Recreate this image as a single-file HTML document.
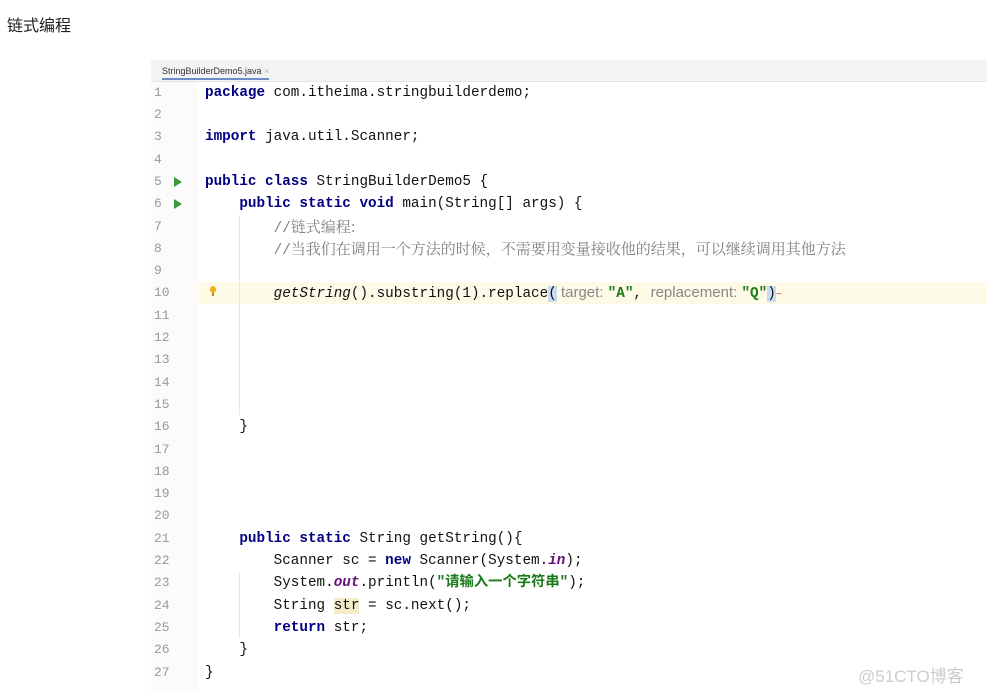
<!DOCTYPE html>
<html><head><meta charset="utf-8"><style>
body{margin:0;width:987px;height:692px;background:#fff;position:relative;overflow:hidden;font-family:"Liberation Sans","Noto Sans CJK SC",sans-serif}
.t{position:absolute;left:7px;top:12px;font-size:16px;color:#222}
.ed{position:absolute;left:151px;top:60px;width:836px;height:632px;background:#fff}
.tab{position:absolute;left:151px;top:60px;width:836px;height:21px;background:#f3f3f3;border-bottom:1px solid #e4e4e4}
.tabn{position:absolute;left:162px;top:66px;font-size:9px;color:#333;border-bottom:2px solid #6a8fc8;padding-bottom:2px}
.gut{position:absolute;left:151px;top:82px;width:47px;height:610px;background:#fbfbfb}
.ln{position:absolute;left:154px;font:13px "Liberation Mono",monospace;color:#999;height:22px;line-height:22px}
.c{position:absolute;left:205px;font:14.3px "Liberation Mono","Noto Sans CJK SC",monospace;color:#111;white-space:pre;height:22px;line-height:22px}
.k{color:#000080;font-weight:bold}
.cm{color:#808080}
.cm b{font-weight:normal;font-family:"Noto Serif CJK SC",serif;font-size:15px}
.s{color:#1a7a1a;font-weight:bold}
.hint{color:#888;font-family:"Liberation Sans",sans-serif;font-size:15px}
.run{position:absolute;left:174px;width:0;height:0;border-left:8px solid #3a9a3a;border-top:5px solid transparent;border-bottom:5px solid transparent}
.hl{position:absolute;left:198px;top:282px;width:789px;height:22px;background:#fdfbe8}
.guide{position:absolute;left:239px;width:1px;background:#e6e6e6}
.wm{position:absolute;left:858px;top:662px;font-size:17px;color:#ccc}
</style></head><body>
<div class="t">链式编程</div>
<div class="ed"></div>
<div class="tab"></div>
<div class="tabn">StringBuilderDemo5.java <span style="color:#bbb">×</span></div>
<div class="gut"></div>
<div class="hl"></div>
<div class="guide" style="top:215px;height:200px"></div>
<div class="guide" style="top:572px;height:66px"></div>
<div class="run" style="top:177px"></div>
<div class="run" style="top:199px"></div>
<div style="position:absolute;left:210px;top:286px;width:6px;height:7px;border-radius:50%;background:#f0b020"></div>
<div style="position:absolute;left:212px;top:293px;width:2px;height:3px;background:#c08010"></div>

<div class="ln" style="top:82px">1</div>
<div class="ln" style="top:104px">2</div>
<div class="ln" style="top:126px">3</div>
<div class="ln" style="top:149px">4</div>
<div class="ln" style="top:171px">5</div>
<div class="ln" style="top:193px">6</div>
<div class="ln" style="top:216px">7</div>
<div class="ln" style="top:238px">8</div>
<div class="ln" style="top:260px">9</div>
<div class="ln" style="top:282px">10</div>
<div class="ln" style="top:305px">11</div>
<div class="ln" style="top:327px">12</div>
<div class="ln" style="top:349px">13</div>
<div class="ln" style="top:372px">14</div>
<div class="ln" style="top:394px">15</div>
<div class="ln" style="top:416px">16</div>
<div class="ln" style="top:439px">17</div>
<div class="ln" style="top:461px">18</div>
<div class="ln" style="top:483px">19</div>
<div class="ln" style="top:505px">20</div>
<div class="ln" style="top:528px">21</div>
<div class="ln" style="top:550px">22</div>
<div class="ln" style="top:572px">23</div>
<div class="ln" style="top:595px">24</div>
<div class="ln" style="top:617px">25</div>
<div class="ln" style="top:639px">26</div>
<div class="ln" style="top:662px">27</div>

<div class="c" style="top:82px"><span class="k">package</span> com.itheima.stringbuilderdemo;</div>
<div class="c" style="top:126px"><span class="k">import</span> java.util.Scanner;</div>
<div class="c" style="top:171px"><span class="k">public class</span> StringBuilderDemo5 {</div>
<div class="c" style="top:193px">    <span class="k">public static void</span> main(String[] args) {</div>
<div class="c cm" style="top:216px">        //<b>链式编程:</b></div>
<div class="c cm" style="top:238px">        //<b>当我们在调用一个方法的时候，不需要用变量接收他的结果，可以继续调用其他方法</b></div>
<div class="c" style="top:282px">        <i>getString</i>().substring(1).replace<span style="background:#c8dcf0">(</span><span class="hint"> target: </span><span class="s">"A"</span>, <span class="hint">replacement: </span><span class="s">"Q"</span><span style="background:#c8dcf0">)</span><span style="color:#d04040;font-size:10px">~</span></div>
<div class="c" style="top:416px">    }</div>
<div class="c" style="top:528px">    <span class="k">public static</span> String getString(){</div>
<div class="c" style="top:550px">        Scanner sc = <span class="k">new</span> Scanner(System.<i class="k" style="color:#660e7a">in</i>);</div>
<div class="c" style="top:572px">        System.<i style="color:#660e7a;font-weight:bold">out</i>.println(<span class="s">"请输入一个字符串"</span>);</div>
<div class="c" style="top:595px">        String <span style="background:#f3ecc8">str</span> = sc.next();</div>
<div class="c" style="top:617px">        <span class="k">return</span> str;</div>
<div class="c" style="top:639px">    }</div>
<div class="c" style="top:662px">}</div>
<div class="wm">@51CTO博客</div>
</body></html>
